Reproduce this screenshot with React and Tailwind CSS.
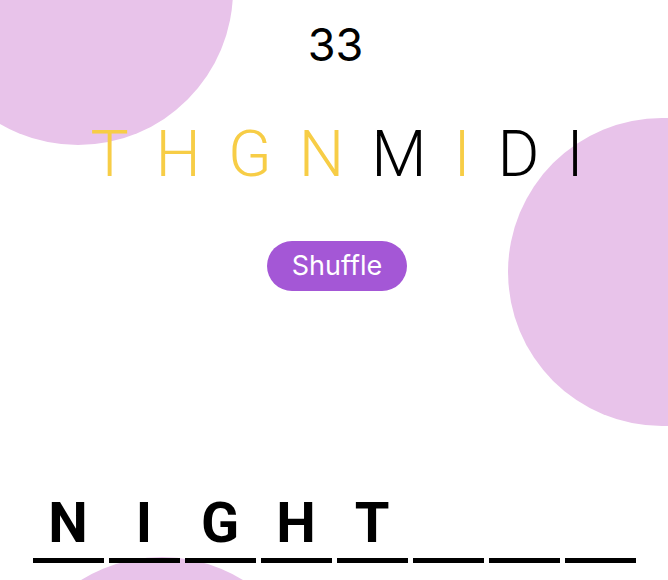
const scrambled = [
  { ch: 'T', used: true },
  { ch: 'H', used: true },
  { ch: 'G', used: true },
  { ch: 'N', used: true },
  { ch: 'M', used: false },
  { ch: 'I', used: true },
  { ch: 'D', used: false },
  { ch: 'I', used: false },
];

const guess = ['N', 'I', 'G', 'H', 'T', '', '', ''];

export default function App() {
  return (
    <div className="relative h-[580px] w-full overflow-hidden bg-white">
      {/* background blobs */}
      <div className="absolute left-[-77px] top-[-165px] h-[310px] w-[310px] rounded-full bg-[#e8c3ea]" />
      <div className="absolute left-[508px] top-[118px] h-[308px] w-[308px] rounded-full bg-[#e8c3ea]" />
      <div className="absolute left-[8px] top-[557px] h-[308px] w-[308px] rounded-full bg-[#e8c3ea]" />

      <div className="relative flex h-full flex-col items-center">
        <p className="ml-[3px] pt-[22px] text-[45px] leading-none text-black" style={{ fontFamily: 'Inter, "Liberation Sans", sans-serif' }}>
          33
        </p>

        <div className="ml-[6px] mt-[56px] flex items-center gap-[27px] font-light" style={{ fontFamily: 'Roboto, "Liberation Sans", sans-serif' }}>
          {scrambled.map((l, i) => (
            <span key={i} className={`text-[64px] leading-none ${l.used ? 'text-[#f7cd46]' : 'text-black'}`}>
              {l.ch}
            </span>
          ))}
        </div>

        <button
          type="button"
          className="ml-[6px] mt-[54px] h-[50px] w-[140px] rounded-full bg-[#a457d6] text-[27px] text-white"
          style={{ fontFamily: 'Inter, "Liberation Sans", sans-serif' }}
        >
          Shuffle
        </button>

        <div className="mt-auto mb-[17px] flex gap-[5px]" style={{ fontFamily: 'Roboto, "Liberation Sans", sans-serif' }}>
          {guess.map((g, i) => (
            <div key={i} className="flex h-[68px] w-[71px] items-end justify-center border-b-[5px] border-black pb-[7px]">
              <span className="text-[56px] font-bold leading-none text-black">{g}</span>
            </div>
          ))}
        </div>
      </div>
    </div>
  );
}
